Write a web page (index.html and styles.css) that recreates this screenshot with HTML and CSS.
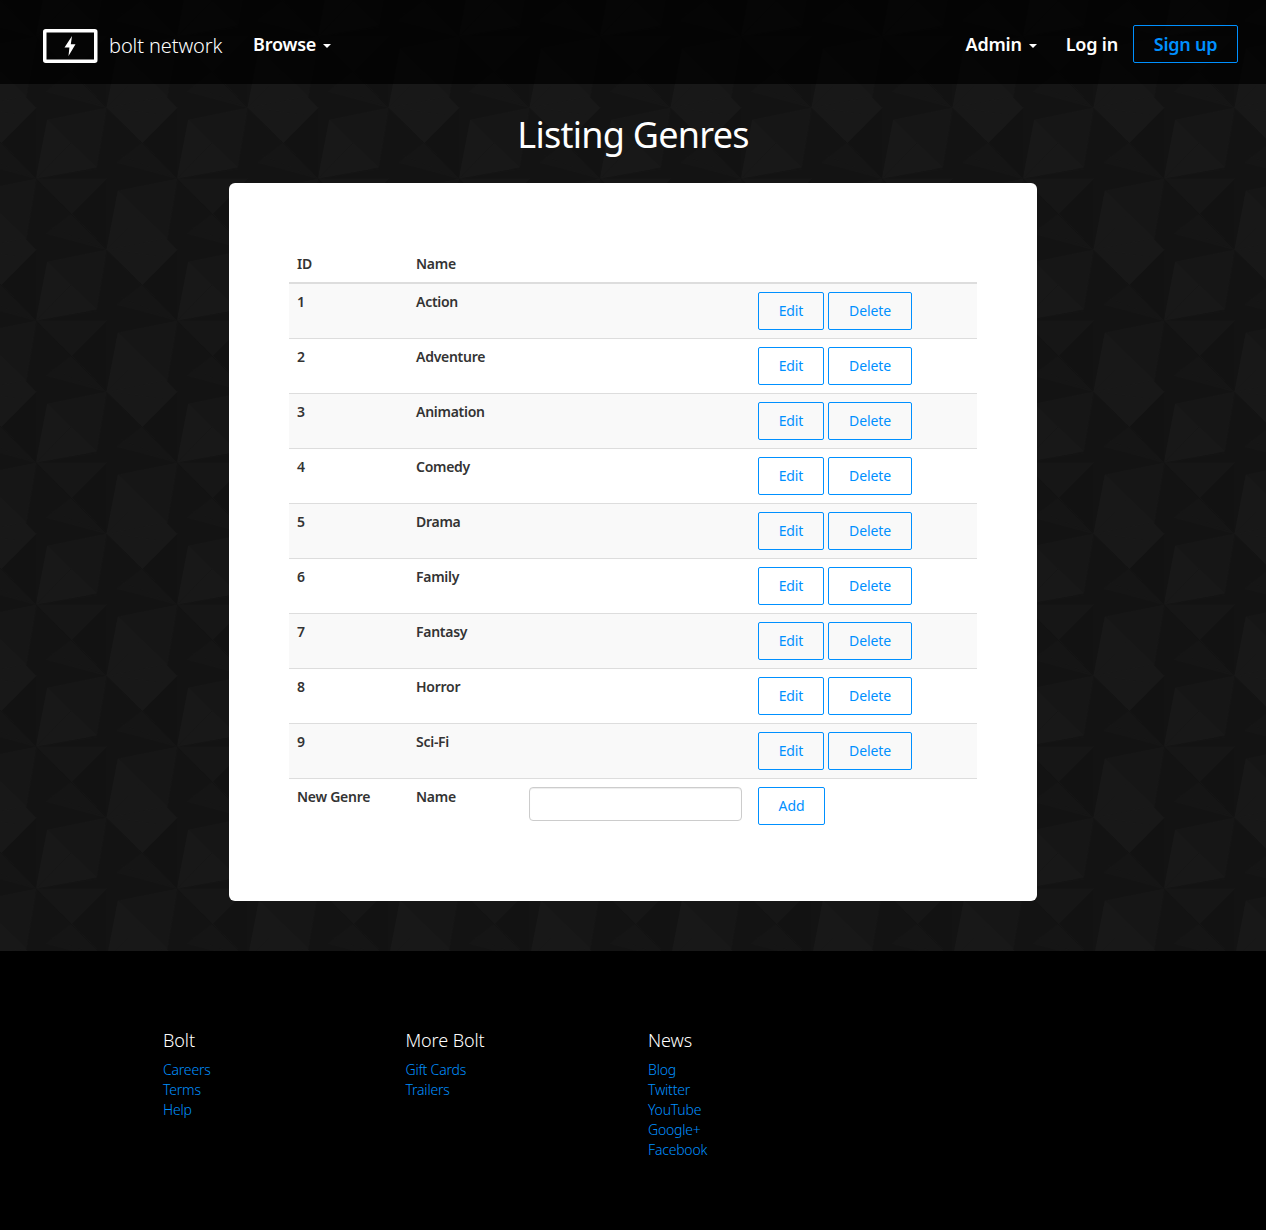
FILE: index.html
```
<!DOCTYPE html>
<html lang="en">
<head>
<meta charset="utf-8">
<title>Bolt Network</title>
<link rel="stylesheet" href="styles.css">
</head>
<body>
<header class="navbar">
  <a class="brand">
    <svg class="logo" viewBox="0 0 55 34" width="55" height="34"><rect x="1.75" y="1.75" width="51" height="30.5" rx="1" fill="none" stroke="#fff" stroke-width="3.5"/><path d="M29 7 21.500 18.500h4.900L25.500 27 32.500 15.300h-4.700z" fill="#fff"/></svg>
    <span class="brand-name">bolt network</span>
  </a>
  <a class="nav-link browse">Browse</a><i class="caret"></i>
  <span class="spacer"></span>
  <a class="nav-link admin">Admin</a><i class="caret"></i>
  <a class="nav-link login">Log in</a>
  <a class="signup">Sign up</a>
</header>
<main>
  <h1>Listing Genres</h1>
  <section class="panel">
    <table>
      <colgroup><col class="c1"><col class="c2"><col class="c3"><col class="c4"></colgroup>
      <thead><tr><th>ID</th><th>Name</th><th></th><th></th></tr></thead>
      <tbody>
        <tr><td>1</td><td>Action</td><td></td><td><div class="actions"><a class="btn edit">Edit</a><a class="btn delete">Delete</a></div></td></tr>
        <tr><td>2</td><td>Adventure</td><td></td><td><div class="actions"><a class="btn edit">Edit</a><a class="btn delete">Delete</a></div></td></tr>
        <tr><td>3</td><td>Animation</td><td></td><td><div class="actions"><a class="btn edit">Edit</a><a class="btn delete">Delete</a></div></td></tr>
        <tr><td>4</td><td>Comedy</td><td></td><td><div class="actions"><a class="btn edit">Edit</a><a class="btn delete">Delete</a></div></td></tr>
        <tr><td>5</td><td>Drama</td><td></td><td><div class="actions"><a class="btn edit">Edit</a><a class="btn delete">Delete</a></div></td></tr>
        <tr><td>6</td><td>Family</td><td></td><td><div class="actions"><a class="btn edit">Edit</a><a class="btn delete">Delete</a></div></td></tr>
        <tr><td>7</td><td>Fantasy</td><td></td><td><div class="actions"><a class="btn edit">Edit</a><a class="btn delete">Delete</a></div></td></tr>
        <tr><td>8</td><td>Horror</td><td></td><td><div class="actions"><a class="btn edit">Edit</a><a class="btn delete">Delete</a></div></td></tr>
        <tr><td>9</td><td>Sci-Fi</td><td></td><td><div class="actions"><a class="btn edit">Edit</a><a class="btn delete">Delete</a></div></td></tr>
        <tr><td>New Genre</td><td>Name</td><td><input type="text"></td><td><div class="actions"><a class="btn add">Add</a></div></td></tr>
      </tbody>
    </table>
  </section>
</main>
<footer>
  <div><h4>Bolt</h4><a>Careers</a><a>Terms</a><a>Help</a></div>
  <div><h4>More Bolt</h4><a>Gift Cards</a><a>Trailers</a></div>
  <div><h4>News</h4><a>Blog</a><a>Twitter</a><a>YouTube</a><a>Google+</a><a>Facebook</a></div>
</footer>
</body>
</html>
```
FILE: styles.css
```
* { box-sizing: border-box; }
body {
  margin: 0;
  font: 14px/20px "Noto Sans", "Open Sans", sans-serif;
  color: #333;
  /* faceted tile, 141 x 142 */
  background: #131313 url("data:image/svg+xml,%3Csvg xmlns='http://www.w3.org/2000/svg' width='141' height='142' viewBox='0 0 423 426'%3E%3Cdefs%3E%3Cg id='f'%3E%3Cpath fill='%23161616' d='M0 0 34-177 212-213 182-34z'/%3E%3Cpath fill='%23181818' d='M0 0 34-177 105-107 182-34z'/%3E%3Cpath fill='%23161616' d='M0 0H212L107 105z'/%3E%3Cpath fill='%23121212' d='M107 105 212 0V213z'/%3E%3Cpath fill='%23151515' d='M107 105 212 213 30 165z'/%3E%3Cpath stroke='%23111' stroke-width='2.5' d='M0 0 212 213'/%3E%3Cpath stroke='%23141414' stroke-width='2' fill='none' d='M0 0 105-107M182-34 212-213M212 213 45 145M0 0 182-30'/%3E%3C/g%3E%3Cg id='g'%3E%3Cuse href='%23f'/%3E%3Cuse href='%23f' x='212' y='213'/%3E%3Cpath fill='%23181818' d='M212 213 317 106 423 213 319 318z'/%3E%3Cpath stroke='%23161616' stroke-width='2' d='M212 213 390 180M212 213 390 235'/%3E%3C/g%3E%3C/defs%3E%3Cuse href='%23g' x='108' y='284'/%3E%3Cuse href='%23g' x='-315' y='284'/%3E%3Cuse href='%23g' x='108' y='-142'/%3E%3Cuse href='%23g' x='-315' y='-142'/%3E%3Cuse href='%23g' x='108' y='710'/%3E%3C/svg%3E") 0 84px;
}
.navbar { height: 84px; padding: 4px 28px 0 43px; display: flex; align-items: center; background: rgba(0, 0, 0, .75); color: #fff; }
.brand { display: flex; align-items: center; gap: 11px; width: 210px; padding-top: 4px; }
.brand-name { font-size: 20px; font-weight: 300; letter-spacing: -.1px; white-space: nowrap; }
.nav-link { font-size: 18px; font-weight: 600; white-space: nowrap; letter-spacing: -.2px; }
.caret { border: 4px solid transparent; border-top-color: #fff; border-bottom: 0; margin: 3px 29px 0 7px; }
.spacer { flex: 1; }
.login { margin-right: 15px; }
.signup { width: 105px; height: 38px; border: 1px solid #0090ff; border-radius: 2px; color: #0090ff; font-size: 18px; font-weight: 600; letter-spacing: -.25px; display: flex; align-items: center; justify-content: center; }
main { height: 867px; }
h1 { margin: 0; height: 99px; padding-top: 31px; font-size: 36px; line-height: 40px; font-weight: 400; letter-spacing: -.75px; color: #fff; text-align: center; }
.panel { width: 808px; height: 718px; margin: 0 auto; padding: 63px 60px 0; background: #fff; border-radius: 6px; }
table { width: 688px; table-layout: fixed; border-spacing: 0; }
.c1 { width: 119px; }
.c2 { width: 113px; }
.c3 { width: 229px; }
.c4 { width: 227px; }
th, td { padding: 8px; text-align: left; vertical-align: top; font-weight: 600; letter-spacing: -.27px; }
th { border-bottom: 2px solid #ddd; height: 38px; }
td { border-top: 1px solid #ddd; height: 55px; }
tbody tr:first-child td { border-top: 0; height: 54px; }
tbody tr:nth-child(odd) td { background: #f9f9f9; }
.actions { display: flex; gap: 4px; }
.btn { height: 38px; width: 66px; border: 1px solid #0090ff; border-radius: 2px; color: #0090ff; font-weight: 400; letter-spacing: -.12px; display: flex; align-items: center; justify-content: center; }
.delete { width: 84px; }
.add { width: 67px; }
input { display: block; width: 213px; height: 34px; border: 1px solid #ccc; border-radius: 4px; box-shadow: inset 0 1px 1px rgba(0, 0, 0, .075); }
footer { height: 279px; padding: 79px 0 0 163px; background: #000; display: grid; grid-template-columns: repeat(3, 242.5px); font-weight: 300; letter-spacing: -.2px; }
h4 { margin: 0 0 10px; font-size: 18px; line-height: 20px; font-weight: 300; letter-spacing: -.1px; color: #fff; }
footer a { display: block; color: #0090ff; }
```
